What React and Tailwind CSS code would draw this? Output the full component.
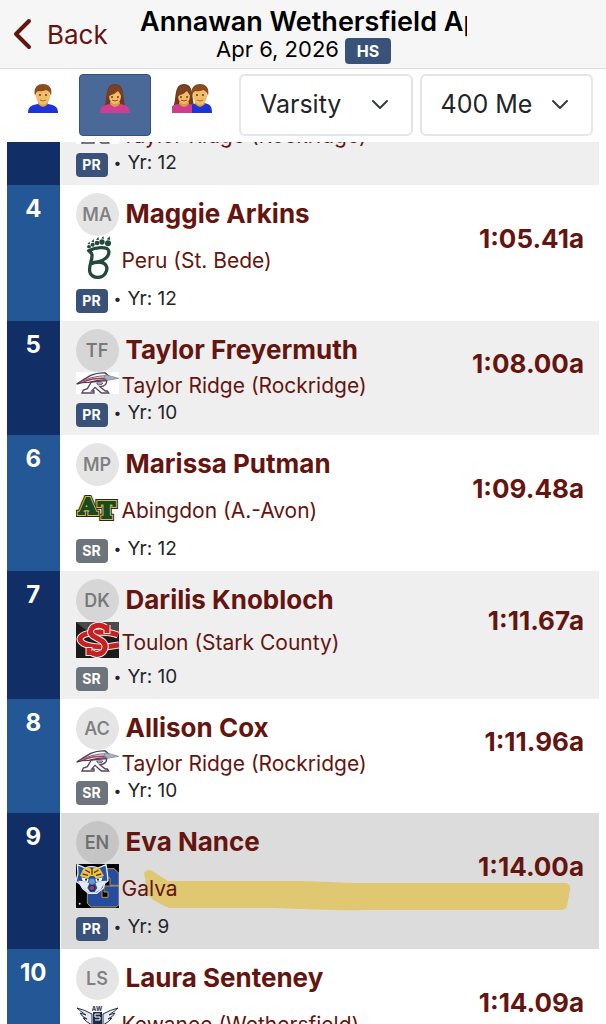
const results = [
  { place: 3, initials: "", name: "", school: "Taylor Ridge (Rockridge)", logo: "rockridge", badge: "PR", year: 12, mark: "" },
  { place: 4, initials: "MA", name: "Maggie Arkins", school: "Peru (St. Bede)", logo: "bede", badge: "PR", year: 12, mark: "1:05.41a" },
  { place: 5, initials: "TF", name: "Taylor Freyermuth", school: "Taylor Ridge (Rockridge)", logo: "rockridge", badge: "PR", year: 10, mark: "1:08.00a" },
  { place: 6, initials: "MP", name: "Marissa Putman", school: "Abingdon (A.-Avon)", logo: "abingdon", badge: "SR", year: 12, mark: "1:09.48a" },
  { place: 7, initials: "DK", name: "Darilis Knobloch", school: "Toulon (Stark County)", logo: "stark", badge: "SR", year: 10, mark: "1:11.67a" },
  { place: 8, initials: "AC", name: "Allison Cox", school: "Taylor Ridge (Rockridge)", logo: "rockridge", badge: "SR", year: 10, mark: "1:11.96a" },
  { place: 9, initials: "EN", name: "Eva Nance", school: "Galva", logo: "galva", badge: "PR", year: 9, mark: "1:14.00a", highlighted: true },
  { place: 10, initials: "LS", name: "Laura Senteney", school: "Kewanee (Wethersfield)", logo: "wethersfield", badge: "PR", year: 10, mark: "1:14.09a" },
];

function ManHead() {
  return (
    <>
      <path d="M10 18h10v2q-5 6-10 0z" fill="#d99a45" />
      <ellipse cx="15" cy="12" rx="7" ry="9" fill="#f2bd68" />
      <path d="M7 12C5 3 10 0 15 0s10 3 8 12q-1-5-5-6-4 2-8 1-2 1-3 5z" fill="#8a4b1d" />
      <path d="M12 16q3 2 6 0" stroke="#b06a35" fill="none" />
      <circle cx="12" cy="11" r="1" fill="#6b3b18" />
      <circle cx="18" cy="11" r="1" fill="#6b3b18" />
    </>
  );
}

function Man() {
  return (
    <>
      <path d="M0 29c0-6 3-8 10-9h10c7 1 10 3 10 9z" fill="#1d35d8" />
      <ManHead />
    </>
  );
}

function Woman() {
  return (
    <>
      <path d="M4 23C8 16 4 0 15 0s7 16 11 23z" fill="#6f3a1c" />
      <path d="M0 29c0-6 3-8 10-9h10c7 1 10 3 10 9z" fill="#cf3d93" />
      <path d="M10 18h10v2q-5 6-10 0z" fill="#d99a45" />
      <ellipse cx="15" cy="12" rx="6" ry="8" fill="#f2bd68" />
      <path d="M8 14C6 5 11 1 15 1s9 4 7 13q-1-3-4-7-3 3-7 4-2 1-3 3z" fill="#7a4220" />
      <path d="M12 16q3 2 6 0" stroke="#b33b32" fill="none" />
      <circle cx="12" cy="13" r="1" fill="#6b3b18" />
      <circle cx="18" cy="13" r="1" fill="#6b3b18" />
    </>
  );
}

function Chevron() {
  return (
    <svg className="pointer-events-none absolute right-6 top-[25px] h-3 w-[18px]" viewBox="0 0 18 12" fill="none" stroke="#343a40" strokeWidth="2" strokeLinecap="round" strokeLinejoin="round">
      <path d="M2 2l7 7 7-7" />
    </svg>
  );
}

function Logo({ name }) {
  if (name === "bede") {
    return (
      <svg className="h-11 w-[43px] shrink-0" viewBox="0 0 129 132">
        <g fill="none" stroke="#23493d" strokeWidth="10" strokeLinejoin="round">
          <path d="M38 44C58 34 94 30 98 44C102 60 84 74 66 78C92 78 98 96 88 112C78 128 52 128 43 112C34 94 50 76 48 56C47 50 42 48 38 44z" />
          <path d="M45 84Q52 78 68 78" />
        </g>
        <g fill="#23493d">
          <ellipse cx="39" cy="32" rx="6" ry="5" />
          <ellipse cx="50" cy="26" rx="6" ry="6" />
          <ellipse cx="63" cy="21" rx="7" ry="7" />
          <ellipse cx="78" cy="18" rx="8" ry="8" />
          <ellipse cx="96" cy="22" rx="9" ry="9" />
          <path d="M34 24l7-7 1 8zM46 17l7-8 1 10zM60 11l7-9 2 10zM76 7l6-7 2 9zM92 10l9-9 1 11z" />
        </g>
      </svg>
    );
  }
  if (name === "rockridge") {
    return (
      <svg className="h-[22px] w-[43px] shrink-0 bg-white" viewBox="0 0 129 66" strokeWidth="4">
        <path d="M46 30L34 50L22 54L18 63H54V57H47L57 46L76 63H98L94 57H88L72 44Q93 42 92 26z" fill="#fbf9fb" stroke="#574465" />
        <path d="M2 36L24 22L44 10Q66 1 88 3L98 12L94 23L66 25L38 31L18 32z" fill="#f7f5f8" stroke="#4c3a60" />
        <path d="M10 32Q44 12 94 11" fill="none" stroke="#6e5a7c" strokeWidth="3" />
        <path d="M22 29Q54 17 92 19" fill="none" stroke="#b03a40" strokeWidth="5" />
        <path d="M88 8L128 19L94 25L84 17z" fill="#a8b0c0" stroke="#757d90" strokeWidth="2" />
        <path d="M62 33H80Q80 39 66 39z" fill="#fff" stroke="#574465" strokeWidth="3" />
      </svg>
    );
  }
  if (name === "abingdon") {
    return (
      <svg className="h-11 w-[43px] shrink-0" viewBox="0 0 43 44" fontFamily="'DejaVu Serif', serif" fontWeight="bold" fontSize="23">
        <g stroke="#23261a" strokeWidth="6" fill="#23261a">
          <text x="3" y="28">A</text>
          <text x="22" y="32">T</text>
        </g>
        <g stroke="#dcbb48" strokeWidth="4" fill="#dcbb48">
          <text x="3" y="28">A</text>
          <text x="22" y="32">T</text>
        </g>
        <g stroke="#174a22" strokeWidth="2" fill="#174a22">
          <text x="3" y="28">A</text>
          <text x="22" y="32">T</text>
        </g>
      </svg>
    );
  }
  if (name === "stark") {
    return (
      <svg className="h-9 w-[43px] shrink-0 bg-[#1b1b1b]" viewBox="0 0 43 36">
        <path d="M0 0H43V12L20 16z" fill="#4a4a4a" />
        <g fill="none" strokeLinecap="butt">
          <path d="M42 13Q34 10 24 10Q5 11 4 17Q5 25 30 25L43 23" stroke="#eee" strokeWidth="7" />
          <path d="M42 13Q34 10 24 10Q5 11 4 17Q5 25 30 25L43 23" stroke="#c9201f" strokeWidth="5" />
          <path d="M31 12V3M30 6Q24 1 17 5Q12 10 17 14L26 19Q32 24 27 30Q21 35 15 30M13 25V34" stroke="#eee" strokeWidth="7" />
          <path d="M31 11V3M30 6Q24 1 17 5Q12 10 17 14L26 19Q32 24 27 30Q21 35 15 30M13 26V33" stroke="#c9201f" strokeWidth="5" />
        </g>
      </svg>
    );
  }
  if (name === "galva") {
    return (
      <svg className="h-11 w-[43px] shrink-0 bg-black" viewBox="0 0 129 132" strokeWidth="3">
        <path d="M84 14H114L129 28V64H102V42H78V100H96V84H84V66H129V122L120 129H46L34 118V80z" fill="#254c9f" stroke="#b09a4b" />
        <path d="M4 2L28 12Q46 4 66 12L90 2L94 28L96 50L86 58L82 72L62 88H38L20 74L12 60L0 52L6 28z" fill="#2850a4" stroke="#e8edf5" strokeWidth="4" />
        <path d="M22 14L36 10L47 16L58 10L72 14L84 36L60 44L54 36H42L36 44L12 36z" fill="#f2c33c" />
        <path d="M28 18L42 26M68 18L54 26M48 12V32M20 30L36 34M76 30L60 34" stroke="#4e3b25" strokeWidth="4" fill="none" />
        <path d="M6 50L28 52L40 58L34 72L42 84H56L64 72L58 58L70 52L92 50L82 64L74 76L58 86H40L24 76L14 64z" fill="#e4eaf5" />
        <path d="M16 40L38 46L36 54L20 50zM80 40L58 46L60 54L76 50z" fill="#fff" />
        <circle cx="30" cy="47" r="3" fill="#222" />
        <circle cx="66" cy="47" r="3" fill="#222" />
        <path d="M42 44H54L58 56L48 62L38 56z" fill="#6f94d2" />
        <path d="M40 66Q48 60 58 66L56 82H42z" fill="#1d2b60" />
        <circle cx="48" cy="72" r="6" fill="#b5404c" />
        <circle cx="11" cy="119" r="3" fill="#ddd" />
      </svg>
    );
  }
  return (
    <svg className="h-11 w-[43px] shrink-0" viewBox="0 0 43 44">
      <path d="M1 8Q9 10 16 14V25Q10 22 7 18L11 19Q5 16 4 13L10 15Q4 11 1 8zM42 8Q34 10 27 14V25Q33 22 36 18L32 19Q38 16 39 13L33 15Q39 11 42 8z" fill="#e6e9ef" stroke="#27304c" />
      <path d="M17 12H26V24L21 29L17 24z" fill="#202a48" />
      <text x="21" y="11" textAnchor="middle" fontSize="6" fontWeight="bold" fontFamily="Inter, sans-serif" fill="#202a48">AW</text>
      <path d="M24 14H19V17H24V20H19" fill="none" stroke="#fff" />
    </svg>
  );
}

function Badge({ label }) {
  return (
    <span
      className={`flex h-6 w-8 items-center justify-center rounded text-sm font-bold text-white ${
        label === "PR" ? "bg-[#38527a]" : "bg-[#6c757d]"
      }`}
    >
      {label}
    </span>
  );
}

function ResultRow({ result }) {
  const odd = result.place % 2 === 1;
  let background = odd ? "bg-[#efefef]" : "bg-white";
  if (result.highlighted) background = "bg-[#dcdcdc]";

  return (
    <tr className={`relative ${background}`}>
      <th
        scope="row"
        className={`w-[53px] pt-2 align-top text-2xl font-bold text-white ${
          odd ? "bg-[#112e66]" : "bg-[#235796]"
        }`}
      >
        {result.place}
      </th>
      <td className="border-l border-white pb-2 pl-[15px] pt-2 align-top">
        <div className="flex h-[43px] items-center gap-[7px]">
          <span className="flex size-[43px] shrink-0 items-center justify-center rounded-full bg-black/10 text-lg font-semibold text-black/45">
            {result.initials}
          </span>
          <a href="#athlete" className="whitespace-nowrap pb-0.5 text-[26px] font-bold leading-8 text-[#65150f]">
            {result.name}
          </a>
        </div>
        <div className="flex items-center gap-[3px]">
          <Logo name={result.logo} />
          <a href="#school" className="relative z-10 -my-2 whitespace-nowrap pt-1.5 text-[21px] leading-7 text-[#65150f]">
            {result.school}
          </a>
        </div>
        <div className="flex items-start pt-[9px] text-[19px] leading-5 text-[#212529]">
          <Badge label={result.badge} />
          <span className="px-1.5 text-sm leading-5">•</span>
          <span>Yr: {result.year}</span>
        </div>
      </td>
      <td className="pb-[30px] pr-[15px] text-right align-middle">
        <a href="#mark" className="text-[26px] font-bold text-[#65150f]">
          {result.mark}
        </a>
        {result.highlighted && (
          <svg
            className="pointer-events-none absolute left-[136px] right-7 top-[55px] h-[46px] w-[428px]"
            viewBox="0 0 428 46"
            preserveAspectRatio="none"
          >
            <path
              d="M1 5Q4 0 9 3L25 13H150C180 13 195 15 220 15H423Q428 16 427 22L424 38Q423 42 418 42H220C180 43 150 40 120 40H26Q18 37 9 31L5 27z"
              fill="#e3b71f"
              fillOpacity="0.56"
            />
          </svg>
        )}
      </td>
    </tr>
  );
}

export default function App() {
  return (
    <div className="flex h-screen flex-col overflow-hidden bg-white font-['Inter',sans-serif]">
      <header className="flex h-[69px] shrink-0 border-b border-[#dcdcdc] bg-[#f6f6f6] text-black">
        <button className="flex w-[140px] shrink-0 items-center gap-[15px] pl-[13px] text-[26px] text-[#65150f]">
          <svg className="h-8 w-[19px]" viewBox="0 0 19 32" fill="none" stroke="currentColor" strokeWidth="4" strokeLinecap="round" strokeLinejoin="round">
            <path d="M16 3L3 16l13 13" />
          </svg>
          Back
        </button>
        <div className="min-w-0 flex-1 overflow-hidden pt-1.5">
          <h1 className="whitespace-nowrap text-[27px] font-semibold leading-8">Annawan Wethersfield Ap</h1>
          <p className="flex items-center justify-center gap-1.5 whitespace-nowrap text-[22px] leading-[26px]">
            <span className="-mt-1">Apr 6, 2026</span>
            <span className="flex h-[26px] w-[46px] items-center justify-center rounded bg-[#38527a] text-base font-bold text-white">
              HS
            </span>
          </p>
        </div>
        <div className="w-[139px] shrink-0" />
      </header>

      {/* Filters */}
      <div className="flex shrink-0 gap-[7px] pb-1.5 pl-[7px] pr-[13px] pt-[5px]">
        <div className="flex h-[62px]">
          <button aria-label="Men" className="flex w-[72px] justify-center pt-2.5">
            <svg className="h-[29px] w-[30px]" viewBox="0 0 30 29">
              <Man />
            </svg>
          </button>
          <button aria-label="Women" className="flex w-[72px] justify-center rounded border border-[#34527f] bg-[#4a6998] pt-[9px]">
            <svg className="h-[29px] w-[30px]" viewBox="0 0 30 29">
              <Woman />
            </svg>
          </button>
          <button aria-label="All" className="flex w-[81px] justify-center pt-2.5">
            <svg className="h-[29px] w-10" viewBox="0 0 40 29">
              <g transform="translate(-3 0)">
                <Woman />
              </g>
              <g transform="translate(13 0)">
                <path d="M7 29V21l4-2h8c6 1 8 3 8 10z" fill="#1d35d8" />
                <ManHead />
              </g>
            </svg>
          </button>
        </div>
        <div className="relative min-w-0 flex-1">
          <select aria-label="Division" className="h-[62px] w-full appearance-none rounded-md border-2 border-[#e3e6e9] bg-white pl-[19px] text-[25px] text-[#212529]">
            <option>Varsity</option>
          </select>
          <Chevron />
        </div>
        <div className="relative min-w-0 flex-1">
          <select aria-label="Event" className="h-[62px] w-full appearance-none rounded-md border-2 border-[#e3e6e9] bg-white pl-[19px] text-[25px] text-[#212529]">
            <option>400 Me</option>
          </select>
          <Chevron />
        </div>
      </div>

      {/* Results, scrolled part way down */}
      <main className="min-h-0 flex-1 overflow-hidden px-[7px]">
        <table className="-mt-[71px] w-full">
          <tbody>
            {results.map((result) => (
              <ResultRow key={result.place} result={result} />
            ))}
          </tbody>
        </table>
      </main>
    </div>
  );
}
